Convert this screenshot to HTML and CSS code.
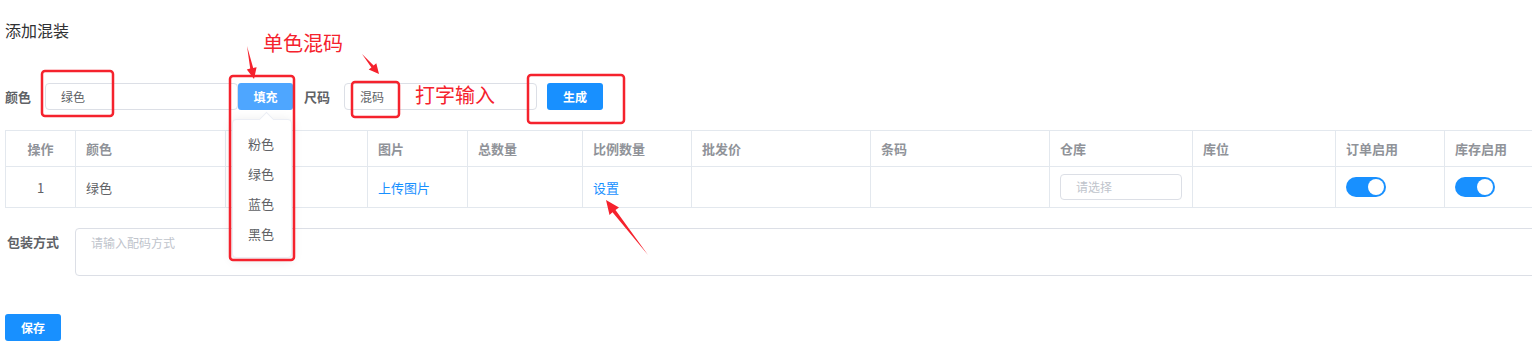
FILE: index.html
```html
<!DOCTYPE html>
<html lang="zh-CN">
<head>
  <meta charset="UTF-8">
  <meta name="viewport" content="width=device-width, initial-scale=1.0">
  <title>添加混装</title>
  <link rel="stylesheet" href="styles.css">
</head>
<body>
  <div class="page-title">添加混装</div>

  <div class="form-row">
    <label class="form-label">颜色</label>
    <div class="text-input">绿色</div>
    <button class="btn btn-fill">填充</button>
    <label class="form-label size-label">尺码</label>
    <div class="text-input">混码</div>
    <button class="btn btn-primary gen-btn">生成</button>
  </div>

  <table class="sku-table">
    <colgroup>
      <col style="width:70px"><col style="width:150px"><col style="width:142px">
      <col style="width:100px"><col style="width:115px"><col style="width:109px">
      <col style="width:179px"><col style="width:179px"><col style="width:143px">
      <col style="width:143px"><col style="width:109px"><col style="width:110px">
    </colgroup>
    <thead>
      <tr>
        <th class="center">操作</th>
        <th>颜色</th>
        <th></th>
        <th>图片</th>
        <th>总数量</th>
        <th>比例数量</th>
        <th>批发价</th>
        <th>条码</th>
        <th>仓库</th>
        <th>库位</th>
        <th>订单启用</th>
        <th>库存启用</th>
      </tr>
    </thead>
    <tbody>
      <tr>
        <td class="center">1</td>
        <td>绿色</td>
        <td></td>
        <td><a class="link">上传图片</a></td>
        <td></td>
        <td><a class="link">设置</a></td>
        <td></td>
        <td></td>
        <td><div class="select-input">请选择</div></td>
        <td></td>
        <td><span class="switch"></span></td>
        <td><span class="switch"></span></td>
      </tr>
    </tbody>
  </table>

  <div class="pack-row">
    <label class="pack-label">包装方式</label>
    <div class="textarea">请输入配码方式</div>
  </div>

  <button class="btn btn-primary save-btn">保存</button>

  <!-- color dropdown opened from 填充 -->
  <div class="dropdown">
    <div class="dropdown-item">粉色</div>
    <div class="dropdown-item">绿色</div>
    <div class="dropdown-item">蓝色</div>
    <div class="dropdown-item">黑色</div>
  </div>

  <!-- annotations -->
  <div class="note note-single">单色混码</div>
  <div class="note note-type">打字输入</div>
  <svg class="marks" width="1532" height="350" viewBox="0 0 1532 350">
    <g fill="none" stroke="#f5222d" stroke-width="2.5">
      <rect x="42" y="71" width="71" height="45" rx="3"/>
      <rect x="230" y="76" width="64" height="184" rx="3"/>
      <rect x="352" y="82" width="47" height="35" rx="3"/>
      <rect x="528" y="75" width="96" height="48" rx="3"/>
    </g>
    <g fill="#f5222d">
      <polygon points="247,46 250.2,68.6 246.8,69.4 254,79 256.6,67.2 253.2,68"/>
      <polygon points="362,54 371.4,67.4 368.7,69.6 379,74 376.3,63.2 373.6,65.4"/>
      <polygon points="648,255 615.5,210 619,207.5 606,200 609.5,215 612.5,212.3"/>
    </g>
  </svg>
</body>
</html>
```

FILE: styles.css
```css
body {
  font-family: "Noto Sans CJK SC", "Noto Sans", sans-serif;
  margin: 0;
  padding: 0 0 0 5px;
  width: 1527px;
  height: 350px;
  overflow: hidden;
  position: relative;
  background: #fff;
  color: #606266;
}
.page-title {
  margin-top: 19px;
  font-size: 16px;
  line-height: 22px;
  color: #303133;
}
.form-row {
  display: flex;
  align-items: center;
  margin-top: 42px;
  height: 27px;
}
.form-label {
  width: 40px;
  font-size: 13px;
  font-weight: bold;
  color: #606266;
}
.size-label {
  margin-left: 11px;
}
.text-input {
  box-sizing: border-box;
  width: 193px;
  height: 27px;
  line-height: 25px;
  border: 1px solid #dcdfe6;
  border-radius: 4px;
  padding-left: 15px;
  font-size: 12px;
  color: #606266;
}
.btn {
  box-sizing: border-box;
  height: 27px;
  border: none;
  border-radius: 3px;
  color: #fff;
  font-family: inherit;
  font-size: 12px;
  font-weight: bold;
  padding: 0;
}
.btn-fill {
  width: 55px;
  background: #4ea6ff;
}
.btn-primary {
  width: 56px;
  background: #1890ff;
}
.gen-btn {
  margin-left: 10px;
}
.sku-table {
  margin-top: 20px;
  width: 1549px;
  table-layout: fixed;
  border-collapse: collapse;
  font-size: 13px;
}
.sku-table th,
.sku-table td {
  border: 1px solid #e3e8ee;
  padding: 0 10px;
  text-align: left;
  white-space: nowrap;
}
.sku-table th {
  height: 35px;
  color: #909399;
  font-weight: bold;
}
.sku-table td {
  height: 40px;
  color: #606266;
}
.sku-table .center {
  text-align: center;
}
.link {
  color: #1890ff;
}
.select-input {
  box-sizing: border-box;
  width: 122px;
  height: 26px;
  line-height: 24px;
  border: 1px solid #dcdfe6;
  border-radius: 4px;
  padding-left: 15px;
  font-size: 12px;
  color: #c0c4cc;
}
.switch {
  display: block;
  position: relative;
  width: 40px;
  height: 20px;
  border-radius: 10px;
  background: #1890ff;
}
.switch::after {
  content: "";
  position: absolute;
  top: 2px;
  right: 2px;
  width: 16px;
  height: 16px;
  border-radius: 50%;
  background: #fff;
}
.pack-row {
  display: flex;
  margin-top: 20px;
}
.pack-label {
  flex-shrink: 0;
  width: 68px;
  padding: 4px 0 0 2px;
  font-size: 13px;
  font-weight: bold;
  color: #606266;
}
.textarea {
  flex-shrink: 0;
  box-sizing: border-box;
  width: 1500px;
  height: 48px;
  border: 1px solid #dcdfe6;
  border-radius: 4px;
  padding: 5px 15px;
  font-size: 12px;
  color: #c0c4cc;
}
.save-btn {
  display: block;
  margin-top: 38px;
}
.dropdown {
  position: absolute;
  left: 232px;
  top: 119px;
  width: 60px;
  height: 139px;
  box-sizing: border-box;
  padding-top: 9px;
  background: #fff;
  border: 1px solid #ebeef5;
  border-radius: 4px;
  box-shadow: 0 2px 12px rgba(0, 0, 0, 0.1);
}
.dropdown::before {
  content: "";
  position: absolute;
  top: -6px;
  left: 28px;
  width: 10px;
  height: 10px;
  background: #fff;
  border-left: 1px solid #ebeef5;
  border-top: 1px solid #ebeef5;
  transform: rotate(45deg);
}
.dropdown-item {
  height: 30px;
  line-height: 30px;
  padding-left: 15px;
  font-size: 13px;
  color: #606266;
}
.note {
  position: absolute;
  color: #f5222d;
  font-size: 20px;
  line-height: 24px;
}
.note-single {
  left: 263px;
  top: 31px;
}
.note-type {
  left: 415px;
  top: 83px;
}
.marks {
  position: absolute;
  left: 0;
  top: 0;
}
```
